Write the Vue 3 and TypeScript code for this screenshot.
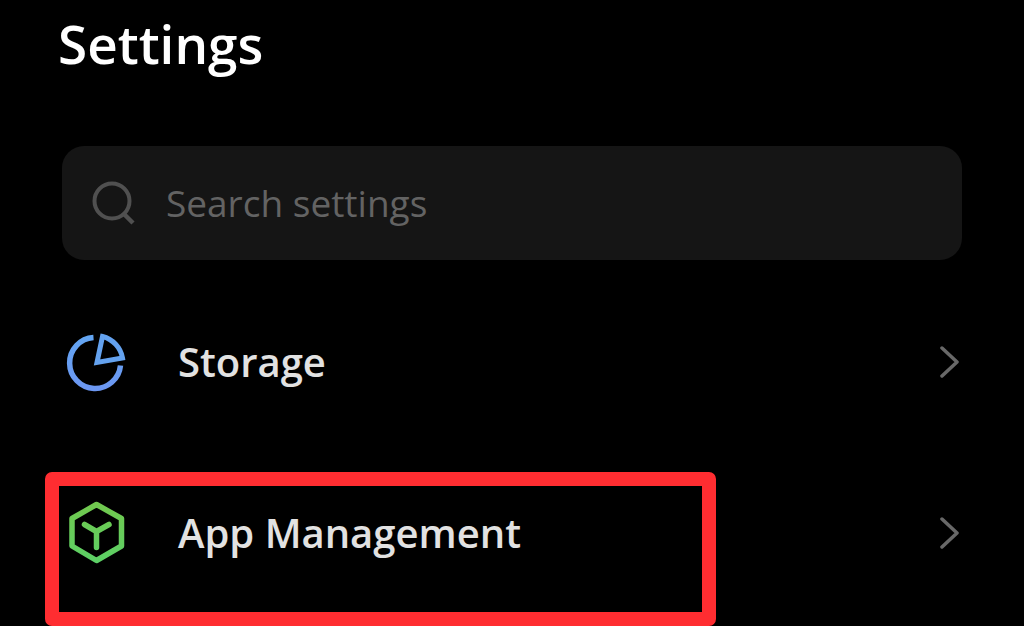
<script setup lang="ts">
import { ref } from 'vue'

interface SettingItem {
  id: 'storage' | 'apps'
  label: string
  highlighted: boolean
}

const query = ref<string>('')

const items: SettingItem[] = [
  { id: 'storage', label: 'Storage', highlighted: false },
  { id: 'apps', label: 'App Management', highlighted: true },
]
</script>

<template>
  <main class="settings">
    <h1 class="title">Settings</h1>

    <label class="search">
      <svg class="search-icon" viewBox="0 0 44 44" fill="none" aria-hidden="true">
        <circle cx="20" cy="20" r="17.5" stroke="#505050" stroke-width="4" />
        <path d="M32 33L41 42" stroke="#505050" stroke-width="4.5" />
      </svg>
      <input v-model="query" class="search-input" type="text" placeholder="Search settings" aria-label="Search settings" />
    </label>

    <ul class="list">
      <li v-for="item in items" :key="item.id" class="item">
        <button class="row" type="button">
          <svg v-if="item.id === 'storage'" class="icon" viewBox="0 0 64 64" fill="none" aria-hidden="true">
            <defs>
              <linearGradient id="storage-blue" x1="0" y1="0" x2="0" y2="1">
                <stop offset="0" stop-color="#63a5f2" />
                <stop offset="1" stop-color="#6c97f2" />
              </linearGradient>
            </defs>
            <path d="M29.5 7.5A25.5 25.5 0 1 0 56.5 35.5" stroke="url(#storage-blue)" stroke-width="5.5" />
            <path d="M38.5 6.5L33 32.5L58.5 28A27 27 0 0 0 38.5 6.5Z" stroke="#64a2ef" stroke-width="5" />
          </svg>
          <svg v-else class="icon" viewBox="0 0 64 64" fill="none" aria-hidden="true">
            <defs>
              <linearGradient id="app-green" x1="0" y1="0" x2="0" y2="64" gradientUnits="userSpaceOnUse">
                <stop offset="0" stop-color="#72c84d" />
                <stop offset="1" stop-color="#5bd067" />
              </linearGradient>
            </defs>
            <g stroke="url(#app-green)" stroke-width="5.5" stroke-linejoin="round" stroke-linecap="round">
              <path d="M32.5 3.500L57.500 17.500V45L32.500 59.500L8 45V17.500Z" />
              <path d="M20.5 23.500L32.500 30.500L45 23.500M32.500 30.500V46.500" />
            </g>
          </svg>
          <span class="label">{{ item.label }}</span>
          <svg class="chevron" viewBox="0 0 20 32" fill="none" aria-hidden="true">
            <path d="M2 2L17 16L2 30" stroke="#686868" stroke-width="3.5" stroke-linecap="round" stroke-linejoin="round" />
          </svg>
        </button>
        <span v-if="item.highlighted" class="highlight" aria-hidden="true"></span>
      </li>
    </ul>
  </main>
</template>

<style>
body {
  margin: 0;
  background: #000;
}
</style>

<style scoped>
.settings {
  padding: 8px 62px;
  color: #e2e2e2;
  font-family: "Open Sans", "Noto Sans", sans-serif;
}

.title {
  margin: 0 0 66px -4px;
  color: #fff;
  font-size: 53px;
  font-weight: 600;
  line-height: 72px;
}

.search {
  display: flex;
  align-items: center;
  gap: 30px;
  box-sizing: border-box;
  height: 114px;
  padding: 0 30px;
  border-radius: 22px;
  background: #151515;
}

.search-icon {
  flex: none;
  width: 44px;
  height: 44px;
}

.search-input {
  flex: 1;
  min-width: 0;
  padding: 0;
  border: 0;
  outline: 0;
  background: transparent;
  color: #e2e2e2;
  font: 400 37px/52px "Open Sans", "Noto Sans", sans-serif;
}

.search-input::placeholder {
  color: #636363;
  opacity: 1;
}

.list {
  margin: 16px 0 0;
  padding: 0;
  list-style: none;
}

.item {
  position: relative;
}

.row {
  display: flex;
  align-items: center;
  box-sizing: border-box;
  width: 100%;
  height: 171px;
  padding: 0 2px;
  border: 0;
  background: transparent;
  color: inherit;
  font: 600 40px/56px "Open Sans", "Noto Sans", sans-serif;
  text-align: left;
  cursor: pointer;
}

.icon {
  flex: none;
  width: 64px;
  height: 64px;
  margin-right: 50px;
}

.label {
  flex: 1;
}

.chevron {
  flex: none;
  width: 20px;
  height: 32px;
}

.highlight {
  position: absolute;
  top: 25px;
  bottom: -8px;
  left: -17px;
  box-sizing: border-box;
  width: 74.5%;
  border: 14px solid #ff2d31;
  border-radius: 7px;
  pointer-events: none;
}
</style>
